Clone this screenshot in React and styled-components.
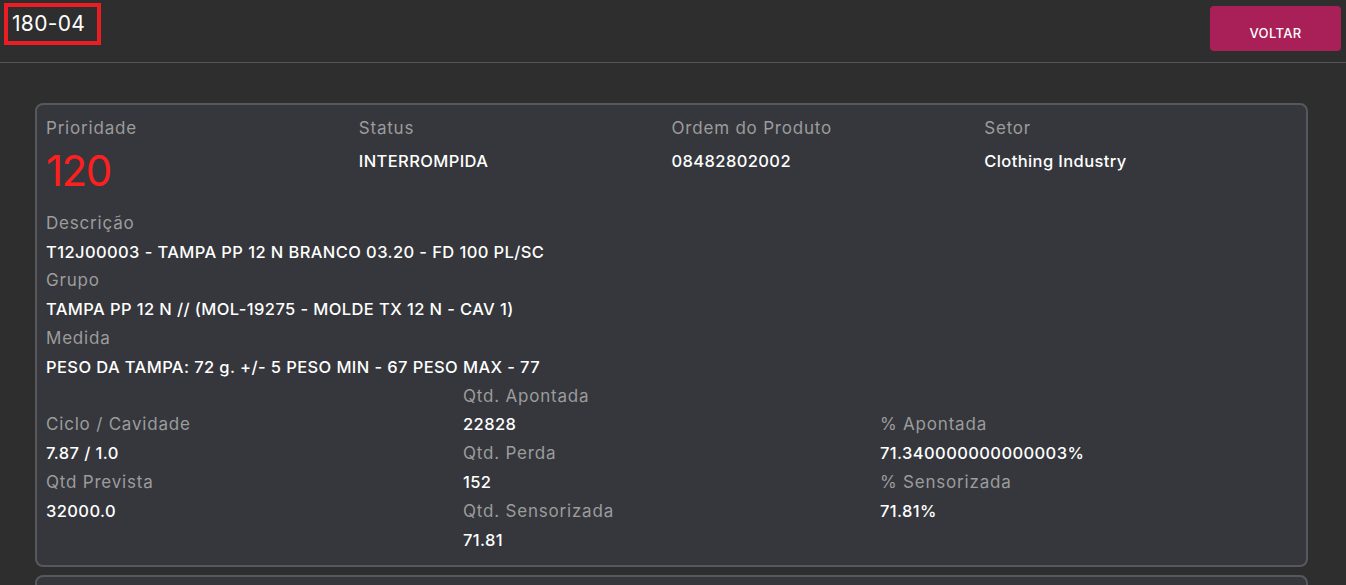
import React from "react";
import styled, { createGlobalStyle } from "styled-components";

const GlobalStyle = createGlobalStyle`
  body {
    margin: 0;
    background-color: #2e2e2e;
    font-family: "Inter", "Noto Sans", sans-serif;
    color: #fff;
  }
`;

// 상단 바
const Header = styled.header`
  height: 62px;
  border-bottom: 1px solid #55575a;
  display: flex;
  justify-content: space-between;
  align-items: flex-start;
  padding: 0 5px 0 4px;
`;

const Title = styled.h1`
  margin: 3px 0 0;
  box-sizing: border-box;
  height: 42px;
  width: 97px;
  border: 4px solid #ea1c24;
  font-size: 21px;
  font-weight: 400;
  letter-spacing: 0.3px;
  line-height: 34px;
  padding-left: 4px;
`;

const BackButton = styled.button`
  margin-top: 6px;
  width: 131px;
  height: 45px;
  border: none;
  border-radius: 4px;
  background-color: #a91f57;
  color: #fff;
  font-family: inherit;
  font-size: 13px;
  font-weight: 500;
  letter-spacing: 0.4px;
  padding-top: 9px;
  cursor: pointer;
`;

const Content = styled.main`
  padding: 40px 38px 0 35px;
  display: flex;
  flex-direction: column;
  gap: 8px;
`;

const Card = styled.section`
  border: 2px solid #56585c;
  border-radius: 8px;
  background-color: #35373c;
  padding: 9px 9px 11px 9px;
  min-height: ${(p) => p.$minHeight || 0}px;
`;

const TopRow = styled.div`
  display: grid;
  grid-template-columns: repeat(4, 1fr);
  margin-bottom: 14px;
`;

const BottomGrid = styled.div`
  display: grid;
  grid-template-columns: repeat(3, 1fr);
  align-items: center;
`;

const Label = styled.div`
  font-size: 17px;
  letter-spacing: 0.8px;
  line-height: 28.8px;
  color: #9c9c9c;
  white-space: nowrap;
`;

const Value = styled.div`
  font-size: 16.5px;
  letter-spacing: 0.4px;
  line-height: 28.8px;
  font-weight: 500;
  color: #fff;
  white-space: nowrap;
  margin-top: ${(p) => (p.$top ? 4 : 0)}px;
`;

const Priority = styled.div`
  font-size: 42px;
  letter-spacing: -1.5px;
  line-height: 48px;
  margin-top: 4px;
  color: #ff1f1f;
`;

const Field = ({ label, value, top }) => (
  <div>
    <Label>{label}</Label>
    <Value $top={top}>{value}</Value>
  </div>
);

export default function App() {
  return (
    <>
      <GlobalStyle />
      <Header>
        <Title>180-04</Title>
        <BackButton>VOLTAR</BackButton>
      </Header>

      <Content>
        <Card>
          <TopRow>
            <div>
              <Label>Prioridade</Label>
              <Priority>120</Priority>
            </div>
            <Field label="Status" value="INTERROMPIDA" top />
            <Field label="Ordem do Produto" value="08482802002" top />
            <Field label="Setor" value="Clothing Industry" top />
          </TopRow>

          <Field label="Descrição" value="T12J00003 - TAMPA PP 12 N BRANCO 03.20 - FD 100 PL/SC" />
          <Field label="Grupo" value="TAMPA PP 12 N // (MOL-19275 - MOLDE TX 12 N - CAV 1)" />
          <Field label="Medida" value="PESO DA TAMPA: 72 g. +/- 5 PESO MIN - 67 PESO MAX - 77" />

          <BottomGrid>
            <div>
              <Field label="Ciclo / Cavidade" value="7.87 / 1.0" />
              <Field label="Qtd Prevista" value="32000.0" />
            </div>
            <div>
              <Field label="Qtd. Apontada" value="22828" />
              <Field label="Qtd. Perda" value="152" />
              <Field label="Qtd. Sensorizada" value="71.81" />
            </div>
            <div>
              <Field label="% Apontada" value="71.340000000000003%" />
              <Field label="% Sensorizada" value="71.81%" />
            </div>
          </BottomGrid>
        </Card>

        <Card $minHeight={60} />
      </Content>
    </>
  );
}
